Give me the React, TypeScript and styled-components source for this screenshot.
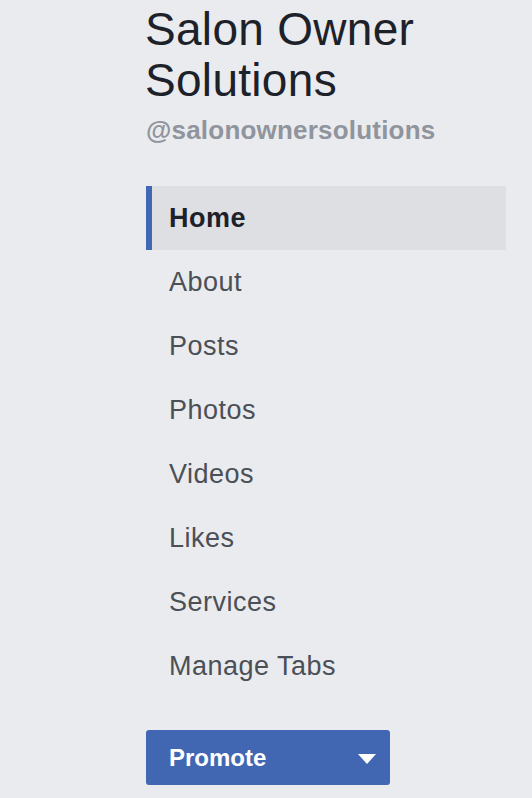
import React from "react";
import styled, { createGlobalStyle } from "styled-components";

const Global = createGlobalStyle`
  html, body { margin: 0; padding: 0; background: #e9ebee; }
  body { font-family: "Liberation Sans", Arial, Helvetica, sans-serif; }
`;

const Page = styled.div`
  min-height: 798px;
  background: #e9ebee;
  padding: 4px 0 0 146px;
  box-sizing: border-box;
`;

const Column = styled.div`
  width: 360px;
  display: flex;
  flex-direction: column;
`;

const Title = styled.h1`
  margin: 0 0 0 -1px;
  font-size: 46px;
  line-height: 51px;
  font-weight: 400;
  color: #1d2129;
  letter-spacing: 0.3px;
`;

const Handle = styled.div`
  margin-top: 9px;
  font-size: 26px;
  line-height: 30px;
  font-weight: 700;
  color: #90949c;
  letter-spacing: 0.2px;
`;

const Nav = styled.nav`
  margin-top: 41px;
  display: flex;
  flex-direction: column;
`;

const NavItem = styled.a<{ $active?: boolean }>`
  height: 64px;
  display: flex;
  align-items: center;
  box-sizing: border-box;
  padding-left: 17px;
  border-left: 6px solid ${(p) => (p.$active ? "#4267b2" : "transparent")};
  background: ${(p) => (p.$active ? "#dddfe2" : "transparent")};
  color: ${(p) => (p.$active ? "#1d2129" : "#4b4f56")};
  font-weight: ${(p) => (p.$active ? 700 : 400)};
  font-size: 27px;
  letter-spacing: 0.5px;
  text-decoration: none;
`;

const PromoteButton = styled.button`
  margin-top: 32px;
  width: 244px;
  height: 55px;
  border: none;
  border-radius: 3px;
  background: #4267b2;
  color: #fff;
  display: flex;
  align-items: center;
  justify-content: space-between;
  padding: 0 14px 0 23px;
  box-sizing: border-box;
  font-family: "Liberation Sans", Arial, sans-serif;
  font-size: 24px;
  font-weight: 700;
`;

const Caret = styled.span`
  width: 0;
  height: 0;
  border-left: 9px solid transparent;
  border-right: 9px solid transparent;
  border-top: 10px solid #fff;
  margin-top: 2px;
`;

const items = ["Home", "About", "Posts", "Photos", "Videos", "Likes", "Services", "Manage Tabs"];

export default function App() {
  return (
    <>
      <Global />
      <Page>
        <Column>
          <Title>
            Salon Owner
            <br />
            Solutions
          </Title>
          <Handle>@salonownersolutions</Handle>
          <Nav>
            {items.map((it, i) => (
              <NavItem key={it} $active={i === 0}>
                {it}
              </NavItem>
            ))}
          </Nav>
          <PromoteButton>
            Promote
            <Caret />
          </PromoteButton>
        </Column>
      </Page>
    </>
  );
}
